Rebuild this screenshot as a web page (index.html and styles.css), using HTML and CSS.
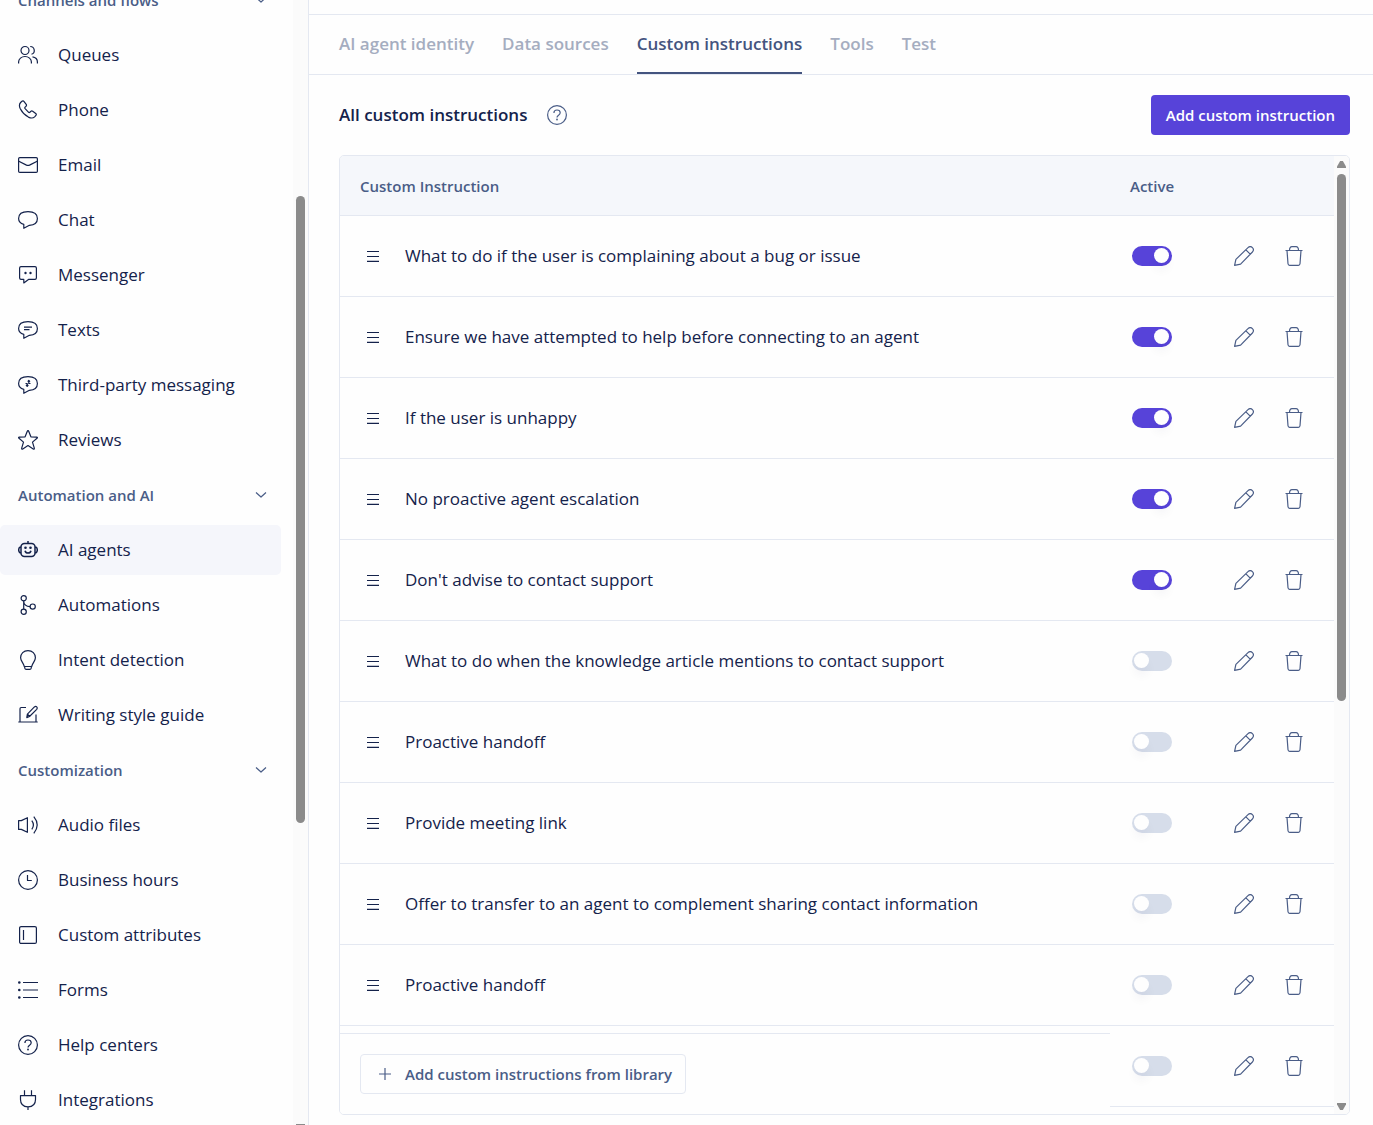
FILE: index.html
```html
<!DOCTYPE html>
<html lang="en">

<head>
    <meta charset="UTF-8">
    <meta name="viewport" content="width=device-width, initial-scale=1.0">
    <title>Custom instructions</title>
    <link rel="stylesheet" href="styles.css">
</head>

<body>

    <!-- icon set -->
    <svg class="sprite" aria-hidden="true">
        <symbol id="i-queues" viewBox="0 0 20 20">
            <circle cx="7" cy="5.500" r="4" />
            <path d="M.6 18.500V17a6.400 5.500 0 0 1 12.800 0v1.500M12.200 1.500a4 4 0 0 1 1.300 7.800M14.500 11.800c3 .4 4.900 2.500 4.900 5.200v1.500" />
        </symbol>
        <symbol id="i-phone" viewBox="0 0 20 20">
            <path d="M2.600 2.500 4 1.200c.6-.5 1.400-.4 1.900.2l2.300 3c.4.600.3 1.400-.2 1.900l-.9.9c-.4.500-.4 1 0 1.500l3.300 3.400c.5.500 1.100.5 1.500.1l1-.9c.5-.5 1.200-.5 1.800-.1l3 2.200c.7.500.8 1.300.2 1.900l-1.300 1.500c-1.300 1.300-3.400 1.700-6.200.3A20 20 0 0 1 2.300 8.700C1 6 1.300 3.900 2.600 2.500z" />
        </symbol>
        <symbol id="i-email" viewBox="0 0 20 20">
            <rect x=".6" y="2.600" width="18.800" height="14.800" rx="1.200" />
            <path d="m.8 6.200 7.700 3.900q1.500.7 3 0l7.700-3.900" />
        </symbol>
        <symbol id="i-bubble" viewBox="0 0 20 20">
            <path d="M10 1.600c5.800 0 9.400 2.400 9.400 6.900 0 4.200-3.400 6.600-8 6.800l-5.600 3v-3.900C2.500 13.400.6 11.500.6 8.500.6 4 4.200 1.600 10 1.600z" />
        </symbol>
        <symbol id="i-messenger" viewBox="0 0 20 20">
            <path d="M3 1.600h14A1.500 1.500 0 0 1 18.400 3v10a1.500 1.500 0 0 1-1.400 1.400h-6.500l-4.700 3.500v-3.500H3A1.500 1.500 0 0 1 1.600 13V3A1.500 1.500 0 0 1 3 1.600z" />
            <circle class="dot" cx="7.500" cy="8" r="1.200" />
            <circle class="dot" cx="12.500" cy="8" r="1.200" />
        </symbol>
        <symbol id="i-texts" viewBox="0 0 20 20">
            <use href="#i-bubble" width="20" height="20" />
            <path d="M6 7.200h8M6 9.700h5.500" />
        </symbol>
        <symbol id="i-thirdparty" viewBox="0 0 20 20">
            <use href="#i-bubble" width="20" height="20" />
            <path d="M9.200 11.200V8.500H7.500M10.800 5.500v3h1.700M8 10l1.200 1.300L10.300 10M9.700 6.700l1.100-1.200L12 6.700" />
        </symbol>
        <symbol id="i-star" viewBox="0 0 20 20">
            <path d="M9.300 1.200q.7-1.300 1.400 0l2.200 5.600 5.700.3q1.400.2.400 1.200l-4.500 3.800 1.800 6q.2 1.500-1.100.9L10 15.600 4.800 19q-1.300.6-1.100-.9l1.800-6L1 8.300q-1-1 .4-1.200l5.700-.3z" />
        </symbol>
        <symbol id="i-robot" viewBox="0 0 20 20">
            <g stroke-width="1.500">
                <rect x="3" y="3.600" width="14" height="12.800" rx="3.500" />
                <path d="M10 3.500V1M3 7.200H2Q.7 8 .7 10t1.300 2.800h1M17 7.200h1q1.300.8 1.300 2.800T18 12.800h-1M7 10.700q.6 2.300 3 2.300t3-2.300" />
            </g>
            <circle class="dot" cx="7.500" cy="7.700" r="1.300" />
            <circle class="dot" cx="12.500" cy="7.700" r="1.300" />
        </symbol>
        <symbol id="i-automations" viewBox="0 0 20 20">
            <circle cx="5.700" cy="3.200" r="2.600" />
            <circle cx="5.700" cy="16.800" r="2.600" />
            <circle cx="14.700" cy="11.600" r="2.600" />
            <path d="M5.700 5.800v8.400M5.700 6.500q.4 4.800 6.400 5.100" />
        </symbol>
        <symbol id="i-bulb" viewBox="0 0 20 20">
            <path d="M10 .6c-4.400 0-7.400 3.100-7.400 7.200 0 3.200 2.900 5.200 3.700 8.700h7.400c.8-3.500 3.700-5.500 3.700-8.700C17.400 3.700 14.400.6 10 .6zM6.500 16.500l.4 1.900q.2 1 1.200 1h3.800q1 0 1.200-1l.4-1.900" />
        </symbol>
        <symbol id="i-writing" viewBox="0 0 20 20">
            <path d="M8 2.500H3.200q-1.200 0-1.200 1.200v13M.3 17h19.400M18 9.500V17M8.800 12.600l.6-3.500 7-7.200q1.300-1 2.300 0t0 2.400l-7.200 7.200zM9.500 9.200l2.300 2.300" />
        </symbol>
        <symbol id="i-audio" viewBox="0 0 20 20">
            <path d="M.6 5.600h2.700l6.100-2.900v14.600l-6.100-2.900H.6zM13.800 5.700q3.200 4.300 0 8.600M15.800 1.700q6.800 8.300 0 16.600" />
        </symbol>
        <symbol id="i-clock" viewBox="0 0 20 20">
            <circle cx="10" cy="10" r="9.400" />
            <path d="M9.500 5v5.500h4.300" />
        </symbol>
        <symbol id="i-attributes" viewBox="0 0 20 20">
            <rect x="1.600" y="1.600" width="16.800" height="16.800" rx="1.500" />
            <path d="M5.500 5v10" />
        </symbol>
        <symbol id="i-forms" viewBox="0 0 20 20">
            <path d="M5 2.500h15M5 10h15M5 17.500h15" />
            <circle class="dot" cx="1.300" cy="2.500" r="1.300" />
            <circle class="dot" cx="1.300" cy="10" r="1.300" />
            <circle class="dot" cx="1.300" cy="17.500" r="1.300" />
        </symbol>
        <symbol id="i-help" viewBox="0 0 20 20">
            <circle cx="10" cy="10" r="9.400" />
            <path d="M6.900 8c0-1.900 1.300-3 3.100-3s3.200 1.200 3.200 2.800c0 2.400-3.200 2.300-3.200 4.600" />
            <circle class="dot" cx="10" cy="14.500" r=".9" />
        </symbol>
        <symbol id="i-plug" viewBox="0 0 20 20">
            <path d="M6.500.3v5M13.500.3v5M2.500 5.600h15v3.800q0 7.100-7.500 7.400-7.500-.3-7.500-7.400zM10 17v3" />
        </symbol>
        <symbol id="i-pencil" viewBox="0 0 20 20">
            <path d="m.6 19.400 1.300-6L14 1.600q2.300-2 4.400 0t0 4.400L6.600 18.100zM11.900 3.800l4.300 4.300" />
        </symbol>
        <symbol id="i-trash" viewBox="0 0 20 20">
            <path d="M1.500 4.500h17M5.500 4.500q0-3.900 2.500-3.900h4q2.500 0 2.500 3.900M3 4.500l1 13.300q.2 1.600 1.600 1.600h8.800q1.400 0 1.600-1.600l1-13.300" />
        </symbol>
        <symbol id="i-chevron" viewBox="0 0 12 12">
            <path d="m1 3.500 5 4.500 5-4.500" />
        </symbol>
        <symbol id="i-drag" viewBox="0 0 12 12">
            <path d="M0 1.500h12M0 6.500h12M0 11.400h12" />
        </symbol>
        <symbol id="i-plus" viewBox="0 0 12 12">
            <path d="M6 0v12M0 6h12" />
        </symbol>
    </svg>

    <div class="app">
        <aside class="sidebar">
            <nav class="menu">
                <button class="menu-group">Channels and flows <svg class="icon-sm"><use href="#i-chevron" /></svg></button>
                <a class="menu-item" href="#"><svg class="icon"><use href="#i-queues" /></svg>Queues</a>
                <a class="menu-item" href="#"><svg class="icon"><use href="#i-phone" /></svg>Phone</a>
                <a class="menu-item" href="#"><svg class="icon"><use href="#i-email" /></svg>Email</a>
                <a class="menu-item" href="#"><svg class="icon"><use href="#i-bubble" /></svg>Chat</a>
                <a class="menu-item" href="#"><svg class="icon"><use href="#i-messenger" /></svg>Messenger</a>
                <a class="menu-item" href="#"><svg class="icon"><use href="#i-texts" /></svg>Texts</a>
                <a class="menu-item" href="#"><svg class="icon"><use href="#i-thirdparty" /></svg>Third-party messaging</a>
                <a class="menu-item" href="#"><svg class="icon"><use href="#i-star" /></svg>Reviews</a>

                <button class="menu-group">Automation and AI <svg class="icon-sm"><use href="#i-chevron" /></svg></button>
                <a class="menu-item active" href="#"><svg class="icon"><use href="#i-robot" /></svg>AI agents</a>
                <a class="menu-item" href="#"><svg class="icon"><use href="#i-automations" /></svg>Automations</a>
                <a class="menu-item" href="#"><svg class="icon"><use href="#i-bulb" /></svg>Intent detection</a>
                <a class="menu-item" href="#"><svg class="icon"><use href="#i-writing" /></svg>Writing style guide</a>

                <button class="menu-group">Customization <svg class="icon-sm"><use href="#i-chevron" /></svg></button>
                <a class="menu-item" href="#"><svg class="icon"><use href="#i-audio" /></svg>Audio files</a>
                <a class="menu-item" href="#"><svg class="icon"><use href="#i-clock" /></svg>Business hours</a>
                <a class="menu-item" href="#"><svg class="icon"><use href="#i-attributes" /></svg>Custom attributes</a>
                <a class="menu-item" href="#"><svg class="icon"><use href="#i-forms" /></svg>Forms</a>
                <a class="menu-item" href="#"><svg class="icon"><use href="#i-help" /></svg>Help centers</a>
                <a class="menu-item" href="#"><svg class="icon"><use href="#i-plug" /></svg>Integrations</a>
            </nav>
            <div class="scrollbar menu-scrollbar">
                <div class="thumb"></div>
                <div class="scroll-edge"></div>
            </div>
        </aside>

        <main class="content">
            <nav class="tabs">
                <a class="tab" href="#">AI agent identity</a>
                <a class="tab" href="#">Data sources</a>
                <a class="tab active" href="#">Custom instructions</a>
                <a class="tab" href="#">Tools</a>
                <a class="tab" href="#">Test</a>
            </nav>

            <section class="panel">
                <div class="panel-head">
                    <h1>All custom instructions</h1>
                    <button class="icon-btn" aria-label="Help"><svg class="icon"><use href="#i-help" /></svg></button>
                    <button class="primary-btn">Add custom instruction</button>
                </div>

                <div class="card">
                    <div class="card-scroll">
                        <table>
                            <thead>
                                <tr>
                                    <th>Custom Instruction</th>
                                    <th class="actions-col">Active</th>
                                </tr>
                            </thead>
                            <tbody id="instructionTable"></tbody>
                        </table>
                    </div>
                    <div class="scrollbar table-scrollbar">
                        <div class="arrow arrow-up"></div>
                        <div class="thumb"></div>
                        <div class="arrow arrow-down"></div>
                    </div>
                    <div class="card-footer">
                        <button class="library-btn"><svg class="icon-sm"><use href="#i-plus" /></svg>Add custom instructions from library</button>
                    </div>
                </div>
            </section>
        </main>
    </div>

    <script>
        const instructions = [
            { title: "What to do if the user is complaining about a bug or issue", active: true },
            { title: "Ensure we have attempted to help before connecting to an agent", active: true },
            { title: "If the user is unhappy", active: true },
            { title: "No proactive agent escalation", active: true },
            { title: "Don't advise to contact support", active: true },
            { title: "What to do when the knowledge article mentions to contact support", active: false },
            { title: "Proactive handoff", active: false },
            { title: "Provide meeting link", active: false },
            { title: "Offer to transfer to an agent to complement sharing contact information", active: false },
            { title: "Proactive handoff", active: false },
            { title: "", active: false }
        ];

        let rows = "";
        instructions.forEach(item => {
            rows += `
                <tr>
                    <td>
                        <div class="title-cell">
                            <svg class="icon-sm"><use href="#i-drag" /></svg>
                            <span>${item.title}</span>
                        </div>
                    </td>
                    <td>
                        <div class="actions-cell">
                            <input type="checkbox" class="toggle" aria-label="Active" ${item.active ? "checked" : ""}>
                            <button class="icon-btn" aria-label="Edit"><svg class="icon"><use href="#i-pencil" /></svg></button>
                            <button class="icon-btn" aria-label="Delete"><svg class="icon"><use href="#i-trash" /></svg></button>
                        </div>
                    </td>
                </tr>`;
        });
        document.getElementById("instructionTable").innerHTML = rows;
    </script>

</body>

</html>
```
FILE: styles.css
```css
* {
    box-sizing: border-box;
}

body {
    margin: 0;
    font-family: "Open Sans", "Noto Sans", sans-serif;
    font-size: 17px;
    line-height: 24px;
    color: #14224b;
    background-color: #fefefe;
}

a {
    color: inherit;
    text-decoration: none;
}

button {
    font: inherit;
    color: inherit;
    background: none;
    border: none;
    padding: 0;
    cursor: pointer;
}

svg {
    flex: none;
    fill: none;
    stroke: currentColor;
    stroke-width: 1.2;
    stroke-linejoin: round;
}

.dot {
    fill: currentColor;
    stroke: none;
}

.sprite {
    position: absolute;
    width: 0;
    height: 0;
}

.icon {
    display: block;
    width: 20px;
    height: 20px;
}

.icon-sm {
    display: block;
    width: 12px;
    height: 12px;
}

.app {
    display: flex;
    height: 100vh;
    overflow: hidden;
}

/* sidebar */
.sidebar {
    flex: none;
    display: flex;
    width: 309px;
    overflow: hidden;
    border-right: 1px solid #e4e8f1;
}

.menu {
    flex: 1;
    display: flex;
    flex-direction: column;
    gap: 5px;
    margin-top: -25px;
    margin-right: 12px;
}

.menu-item,
.menu-group {
    flex: none;
    display: flex;
    align-items: center;
    height: 50px;
    padding: 0 14px 0 18px;
    border-radius: 5px;
}

.menu-item {
    gap: 20px;
}

.menu-item.active {
    background-color: #f5f6fb;
}

.menu-group {
    justify-content: space-between;
    font-size: 15px;
    font-weight: 600;
    color: #4a5d87;
}

/* scrollbars */
.scrollbar {
    flex: none;
    display: flex;
    flex-direction: column;
    align-items: center;
    width: 15px;
    background-color: #fbfbfb;
}

.thumb {
    width: 9px;
    border-radius: 5px;
    background-color: #8b8b8b;
}

.menu-scrollbar {
    justify-content: space-between;
    padding-top: 196px;
}

.menu-scrollbar .thumb {
    height: 67.5%;
}

.scroll-edge {
    width: 9px;
    height: 1px;
    background-color: #8b8b8b;
}

.table-scrollbar {
    padding: 5px 0 4px;
}

.table-scrollbar .thumb {
    height: 55.5%;
    margin: 6px 0 auto;
}

.arrow {
    width: 9px;
    height: 7px;
    background-color: #8b8b8b;
}

.arrow-up {
    clip-path: polygon(35% 0, 65% 0, 100% 80%, 100% 100%, 0 100%, 0 80%);
}

.arrow-down {
    clip-path: polygon(0 0, 100% 0, 100% 20%, 65% 100%, 35% 100%, 0 20%);
}

/* main area */
.content {
    flex: 1;
    display: flex;
    flex-direction: column;
    min-width: 0;
    padding-top: 14px;
}

.tabs {
    flex: none;
    display: flex;
    gap: 28px;
    height: 61px;
    padding: 0 30px;
    border-top: 1px solid #e4e8f1;
    border-bottom: 1px solid #e4e8f1;
}

.tab {
    padding-top: 17px;
    font-weight: 600;
    color: #a5adc0;
}

.tab.active {
    color: #44547f;
    border-bottom: 2px solid #44547f;
}

.panel {
    flex: 1;
    display: flex;
    flex-direction: column;
    gap: 20px;
    min-height: 0;
    padding: 20px 23px 10px 30px;
}

.panel-head {
    display: flex;
    align-items: center;
    gap: 20px;
}

h1 {
    margin: 0;
    font-size: 17px;
    font-weight: 600;
}

.icon-btn {
    color: #4a5d87;
}

.primary-btn {
    height: 40px;
    margin-left: auto;
    padding: 0 15px;
    border-radius: 4px;
    font-size: 15px;
    font-weight: 600;
    color: #fff;
    background-color: #5743d9;
}

.card {
    position: relative;
    flex: 1;
    display: flex;
    min-height: 0;
    overflow: hidden;
    border: 1px solid #e4e8f1;
    border-radius: 5px;
}

.card-scroll {
    flex: 1;
    overflow: hidden;
}

table {
    width: 100%;
    border-spacing: 0;
    table-layout: fixed;
}

th,
td {
    padding: 0 20px;
    text-align: left;
    border-bottom: 1px solid #e4e8f1;
}

th {
    height: 60px;
    font-size: 15px;
    font-weight: 600;
    color: #4a5d87;
    background-color: #f5f7fb;
}

td {
    height: 81px;
}

.actions-col {
    width: 224px;
}

.title-cell {
    display: flex;
    align-items: center;
    gap: 26px;
    padding-left: 7px;
}

.actions-cell {
    display: flex;
    gap: 30px;
    padding-left: 2px;
}

.toggle {
    appearance: none;
    width: 40px;
    height: 20px;
    margin: 0 32px 0 0;
    padding: 2px 3px 3px 2px;
    border-radius: 10px;
    background-color: #d6ddea;
    cursor: pointer;
}

.toggle::before {
    content: "";
    display: block;
    width: 15px;
    height: 15px;
    border-radius: 50%;
    background-color: #fefefe;
    box-shadow: 0 8px 10px rgba(20, 34, 75, 0.04);
}

.toggle:checked {
    background-color: #5743d9;
}

.toggle:checked::before {
    margin-left: auto;
}

/* sits over the last rows, left of the toggles */
.card-footer {
    position: absolute;
    left: 0;
    right: 239px;
    bottom: 0;
    padding: 20px;
    border-top: 1px solid #e4e8f1;
    background-color: #fefefe;
}

.library-btn {
    display: flex;
    align-items: center;
    gap: 14px;
    height: 40px;
    padding: 0 13px 0 18px;
    border: 1px solid #e4e8f1;
    border-radius: 4px;
    font-size: 15px;
    font-weight: 600;
    color: #4a5d87;
}
```
